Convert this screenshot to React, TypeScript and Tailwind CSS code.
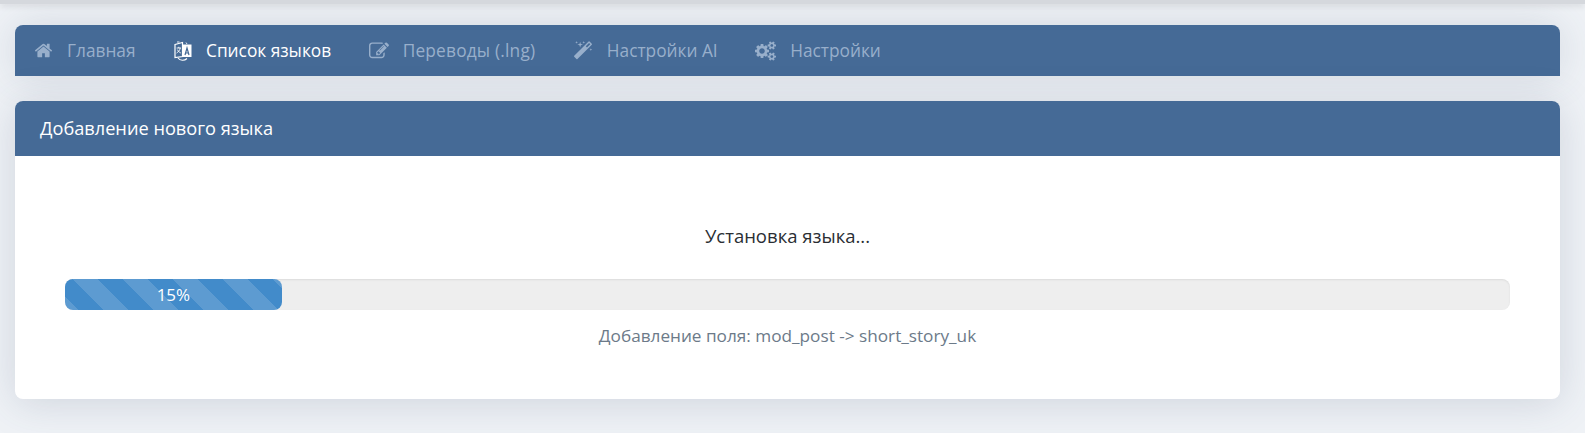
function Fa({ d, w = 1792, className }: { d: string; w?: number; className: string }) {
  return (
    <svg viewBox={`0 0 ${w} 1792`} className={className} fill="currentColor">
      <path d={d} />
    </svg>
  );
}

const HOME =
  "M1472 992v480q0 26-19 45t-45 19h-384v-384h-256v384h-384q-26 0-45-19t-19-45v-480q0-1 .5-3t.5-3l575-474 575 474q1 2 1 6zm223-69l-62 74q-8 9-21 11h-3q-13 0-21-7l-692-577-692 577q-12 8-24 7-13-2-21-11l-62-74q-8-10-7-23.500t11-21.500l719-599q32-26 76-26t76 26l244 204v-195q0-14 9-23t23-9h192q14 0 23 9t9 23v408l219 182q10 8 11 21.500t-7 23.500z";
const EDIT =
  "M888 1184l116-116-152-152-116 116v56h96v96h56zm440-720q-16-16-33 1l-350 350q-17 17-1 33t33-1l350-350q17-17 1-33zm80 594v190q0 119-84.500 203.500t-203.500 84.500h-832q-119 0-203.500-84.500t-84.500-203.500v-832q0-119 84.500-203.500t203.500-84.500h832q63 0 117 25 15 7 18 23 3 17-9 29l-49 49q-14 14-32 8-23-6-45-6h-832q-66 0-113 47t-47 113v832q0 66 47 113t113 47h832q66 0 113-47t47-113v-126q0-13 9-22l64-64q15-15 35-7t20 29zm-96-738l288 288-672 672h-288v-288zm444 132l-92 92-288-288 92-92q28-28 68-28t68 28l152 152q28 28 28 68t-28 68z";
const MAGIC =
  "M1254 581l293-293-107-107-293 293zm447-293q0 27-18 45l-1286 1286q-18 18-45 18t-45-18l-198-198q-18-18-18-45t18-45l1286-1286q18-18 45-18t45 18l198 198q18 18 18 45zm-1351-190l98 30-98 30-30 98-30-98-98-30 98-30 30-98zm350 162l196 60-196 60-60 196-60-196-196-60 196-60 60-196zm930 478l98 30-98 30-30 98-30-98-98-30 98-30 30-98zm-640-640l98 30-98 30-30 98-30-98-98-30 98-30 30-98z";
const COGS =
  "M896 896q0-106-75-181t-181-75-181 75-75 181 75 181 181 75 181-75 75-181zm768 512q0-52-38-90t-90-38-90 38-38 90q0 53 37.500 90.500t90.500 37.500 90.500-37.500 37.500-90.500zm0-1024q0-52-38-90t-90-38-90 38-38 90q0 53 37.500 90.500t90.500 37.500 90.500-37.500 37.500-90.500zm-384 421v185q0 10-7 19.500t-16 10.500l-155 24q-11 35-32 76 34 48 90 115 7 11 7 20 0 12-7 19-23 30-82.500 89.500t-78.500 59.500q-11 0-21-7l-115-90q-37 19-77 31-11 108-23 155-7 24-30 24h-186q-11 0-20-7.500t-10-17.500l-23-153q-34-10-75-31l-118 89q-7 7-20 7-11 0-21-8-144-133-144-160 0-9 7-19 10-14 41-53t47-61q-23-44-35-82l-152-24q-10-1-17-9.500t-7-19.500v-185q0-10 7-19.500t16-10.500l155-24q11-35 32-76-34-48-90-115-7-11-7-20 0-12 7-20 22-30 82-89t79-59q11 0 21 7l115 90q34-18 77-32 11-108 23-154 7-24 30-24h186q11 0 20 7.500t10 17.500l23 153q34 10 75 31l118-89q8-7 20-7 11 0 21 8 144 133 144 160 0 8-7 19-12 16-42 54t-45 60q23 48 34 82l152 23q10 2 17 10.500t7 19.500zm640 533v140q0 16-149 31-12 27-30 52 51 113 51 138 0 4-4 7-122 71-124 71-8 0-46-47t-52-68q-20 2-30 2t-30-2q-14 21-52 68t-46 47q-2 0-124-71-4-3-4-7 0-25 51-138-18-25-30-52-149-15-149-31v-140q0-16 149-31 13-29 30-52-51-113-51-138 0-4 4-7 4-2 35-20t59-34 30-16q8 0 46 46.500t52 67.500q20-2 30-2t30 2q51-71 92-112l6-2q4 0 124 70 4 3 4 7 0 25-51 138 17 23 30 52 149 15 149 31zm0-1024v140q0 16-149 31-12 27-30 52 51 113 51 138 0 4-4 7-122 71-124 71-8 0-46-47t-52-68q-20 2-30 2t-30-2q-14 21-52 68t-46 47q-2 0-124-71-4-3-4-7 0-25 51-138-18-25-30-52-149-15-149-31v-140q0-16 149-31 13-29 30-52-51-113-51-138 0-4 4-7 4-2 35-20t59-34 30-16q8 0 46 46.500t52 67.500q20-2 30-2t30 2q51-71 92-112l6-2q4 0 124 70 4 3 4 7 0 25-51 138 17 23 30 52 149 15 149 31z";

function Translate() {
  return (
    <svg viewBox="0 0 18 20" className="w-[18px] h-[20px]" fill="none">
      <path d="M1 3.5 L8.5 1.5 V15.5 L1 16.5 Z" stroke="currentColor" strokeWidth="1.2" />
      <path d="M8.5 3.5 H17.5 V16 H8.5 Z" fill="currentColor" />
      <path d="M11 14 L13 7 L15 14 M11.8 12 H14.2" stroke="#456a96" strokeWidth="1.2" />
      <path d="M2.6 7 H7 M4.8 5.8 V7 M6.2 7 C5.8 9.4 4.4 10.8 2.6 12 M3.4 8.6 C4 10 5.2 11.2 6.8 12" stroke="currentColor" strokeWidth="0.9" />
      <path d="M4 17 C6 20 10.500 20 13 17.500" stroke="currentColor" strokeWidth="1.1" />
      <path d="M3 1 L5.500 1 M12 1.500 L13 3" stroke="currentColor" strokeWidth="0.9" />
    </svg>
  );
}

const items = [
  { icon: <Fa d={HOME} className="w-[19px] h-[19px]" />, label: "Главная", active: false, wide: false },
  { icon: <Translate />, label: "Список языков", active: true, wide: false },
  { icon: <Fa d={EDIT} className="w-[20px] h-[20px]" />, label: "Переводы (.lng)", active: false, wide: true },
  { icon: <Fa d={MAGIC} className="w-[20px] h-[20px]" />, label: "Настройки AI", active: false, wide: false },
  { icon: <Fa d={COGS} w={1920} className="w-[21px] h-[20px]" />, label: "Настройки", active: false, wide: false },
];

export default function App() {
  return (
    <div className="relative h-[433px] overflow-hidden bg-[#eff2f6] font-['Open_Sans','Noto_Sans',sans-serif]">
      <div className="absolute top-0 left-0 right-0 h-[4px] bg-[#d5d8dd] shadow-[0_2px_6px_rgba(0,0,0,0.12)]" />
      <div className="pl-[15px] pr-[25px] pt-[25px]">
        <nav className="h-[51px] bg-[#456a96] rounded-t-[8px] flex items-center gap-[37.5px] pl-[19px] shadow-[0_0_40px_rgba(60,80,110,0.16)]">
          {items.map((it) => (
            <div
              key={it.label}
              className={`flex items-center gap-[14px] text-[17.3px] ${it.active ? "text-white" : "text-[#98afcb]"}`}
            >
              <span className="min-w-[19px] flex justify-center">{it.icon}</span>
              <span className={it.wide ? "tracking-[0.2px]" : ""}>{it.label}</span>
            </div>
          ))}
        </nav>
        <section className="mt-[25px] h-[298px] bg-white rounded-[8px] overflow-hidden shadow-[0_4px_40px_rgba(60,80,110,0.18)]">
          <header className="h-[55px] bg-[#456a96] flex items-center px-[25px] text-white text-[18.2px]">
            Добавление нового языка
          </header>
          <div className="px-[50px] pt-[66px] flex flex-col">
            <p className="text-center text-[18.5px] leading-[28px] text-[#2a2e33]">Установка языка...</p>
            <div className="mt-[29px] h-[31px] rounded-[8px] bg-[#eeeeee] shadow-[inset_0_1px_2px_rgba(0,0,0,0.08)]">
              <div className="w-[15%] h-full rounded-[8px] bg-[#428bca] bg-[linear-gradient(45deg,rgba(255,255,255,0.14)_25%,transparent_25%,transparent_50%,rgba(255,255,255,0.14)_50%,rgba(255,255,255,0.14)_75%,transparent_75%,transparent)] bg-[size:50px_50px] bg-[position:8px_0] flex items-center justify-center text-white text-[17px]">
                15%
              </div>
            </div>
            <p className="mt-[12px] text-center text-[17.2px] leading-[28px] text-[#6c7a89]">
              Добавление поля: mod_post -&gt; short_story_uk
            </p>
          </div>
        </section>
      </div>
    </div>
  );
}
